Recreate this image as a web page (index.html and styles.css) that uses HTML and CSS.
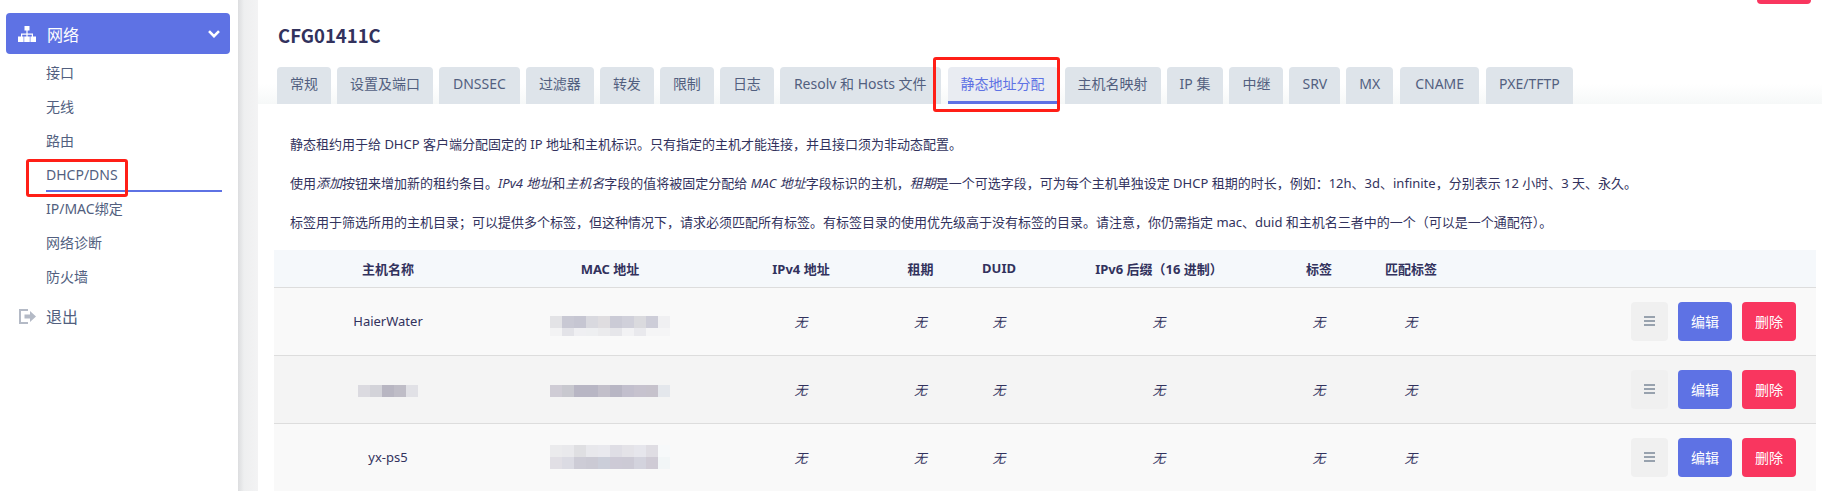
FILE: index.html
```html
<!DOCTYPE html>
<html lang="zh-CN">
<head>
  <meta charset="UTF-8">
  <title>CFG01411C - 静态地址分配</title>
  <link rel="stylesheet" href="styles.css">
</head>
<body>
  <aside class="sidebar">
    <a class="nav-head">
      <svg class="nav-icon" width="18" height="16" viewBox="0 0 18 16"><path fill="#fff" d="M6.500 0h5v4.600h-5zM8.400 4.600h1.200v3H15v2.800h-1.200V8.800H9.600v1.600H8.400V8.800H4.200v1.600H3V7.600h5.400zM0 10.600h5.600V16H0zM6.200 10.600h5.600V16H6.200zM12.400 10.600H18V16h-5.600z"/></svg>
      <span class="nav-head-text">网络</span>
      <svg class="nav-chevron" width="12" height="8" viewBox="0 0 12 8"><path fill="none" stroke="#fff" stroke-width="2.600" d="M1 1.200l5 5 5-5"/></svg>
    </a>
    <ul class="nav-list">
      <li class="nav-item">接口</li>
      <li class="nav-item">无线</li>
      <li class="nav-item">路由</li>
      <li class="nav-item nav-current">DHCP/DNS</li>
      <li class="nav-item">IP/MAC绑定</li>
      <li class="nav-item">网络诊断</li>
      <li class="nav-item">防火墙</li>
    </ul>
    <a class="nav-logout">
      <svg class="logout-icon" width="17" height="15" viewBox="0 0 17 15"><path fill="none" stroke="#b4bac6" stroke-width="2" d="M9 1H1v13h8"/><path fill="#b4bac6" d="M5.500 5.500H11V2l6 5.500-6 5.500V9.500H5.500z"/></svg>
      <span>退出</span>
    </a>
  </aside>

  <main class="main">
    <div class="page-head">
      <div class="top-bar"><button class="btn btn-danger top-btn"></button></div>
      <h2 class="page-title">CFG01411C</h2>
      <ul class="tabs">
        <li class="tab">常规</li>
        <li class="tab">设置及端口</li>
        <li class="tab tab-wide">DNSSEC</li>
        <li class="tab">过滤器</li>
        <li class="tab">转发</li>
        <li class="tab">限制</li>
        <li class="tab">日志</li>
        <li class="tab tab-wide">Resolv 和 Hosts 文件</li>
        <li class="tab tab-active">静态地址分配</li>
        <li class="tab">主机名映射</li>
        <li class="tab">IP 集</li>
        <li class="tab">中继</li>
        <li class="tab">SRV</li>
        <li class="tab">MX</li>
        <li class="tab tab-cname">CNAME</li>
        <li class="tab tab-pxe">PXE/TFTP</li>
      </ul>
    </div>

    <div class="notes">
      <p>静态租约用于给 DHCP 客户端分配固定的 IP 地址和主机标识。只有指定的主机才能连接&#xFF0C;并且接口须为非动态配置。</p>
      <p>使用<em>添加</em>按钮来增加新的租约条目。<em>IPv4 地址</em>和<em>主机名</em>字段的值将被固定分配给 <em>MAC 地址</em>字段标识的主机&#xFF0C;<em>租期</em>是一个可选字段&#xFF0C;可为每个主机单独设定 DHCP 租期的时长&#xFF0C;例如&#xFF1A;12h、3d、infinite&#xFF0C;分别表示 12 小时、3 天、永久。</p>
      <p>标签用于筛选所用的主机目录&#xFF1B;可以提供多个标签&#xFF0C;但这种情况下&#xFF0C;请求必须匹配所有标签。有标签目录的使用优先级高于没有标签的目录。请注意&#xFF0C;你仍需指定 mac、duid 和主机名三者中的一个&#xFF08;可以是一个通配符&#xFF09;。</p>
    </div>

    <table class="leases">
      <colgroup>
        <col class="col-name"><col class="col-mac"><col class="col-ip"><col class="col-time">
        <col class="col-duid"><col class="col-ip6"><col class="col-tag"><col class="col-match"><col>
      </colgroup>
      <thead>
        <tr>
          <th>主机名称</th><th>MAC 地址</th><th>IPv4 地址</th><th>租期</th>
          <th>DUID</th><th>IPv6 后缀&#xFF08;16 进制&#xFF09;</th><th>标签</th><th>匹配标签</th><th></th>
        </tr>
      </thead>
      <tbody>
        <tr>
          <td>HaierWater</td>
          <td><span class="mosaic mac-one"></span></td>
          <td><em>无</em></td><td><em>无</em></td><td><em>无</em></td><td><em>无</em></td><td><em>无</em></td><td><em>无</em></td>
          <td class="actions">
            <button class="btn btn-handle"><span class="handle-bars"></span></button>
            <button class="btn btn-primary">编辑</button>
            <button class="btn btn-danger">删除</button>
          </td>
        </tr>
        <tr>
          <td><span class="mosaic name-two"></span></td>
          <td><span class="mosaic mac-two"></span></td>
          <td><em>无</em></td><td><em>无</em></td><td><em>无</em></td><td><em>无</em></td><td><em>无</em></td><td><em>无</em></td>
          <td class="actions">
            <button class="btn btn-handle"><span class="handle-bars"></span></button>
            <button class="btn btn-primary">编辑</button>
            <button class="btn btn-danger">删除</button>
          </td>
        </tr>
        <tr>
          <td>yx-ps5</td>
          <td><span class="mosaic mac-three"></span></td>
          <td><em>无</em></td><td><em>无</em></td><td><em>无</em></td><td><em>无</em></td><td><em>无</em></td><td><em>无</em></td>
          <td class="actions">
            <button class="btn btn-handle"><span class="handle-bars"></span></button>
            <button class="btn btn-primary">编辑</button>
            <button class="btn btn-danger">删除</button>
          </td>
        </tr>
      </tbody>
    </table>
  </main>
</body>
</html>
```

FILE: styles.css
```css
*, *::after {
  box-sizing: border-box;
}
html, body {
  height: 100%;
}
body {
  margin: 0;
  display: flex;
  overflow: hidden;
  background: #fff;
  color: #32325d;
  font-family: "Noto Sans", "Noto Sans CJK SC", sans-serif;
  font-size: 13px;
}
ul {
  list-style: none;
  margin: 0;
  padding: 0;
}

/* sidebar */
.sidebar {
  width: 258px;
  flex: none;
  padding: 13px 28px 0 6px;
  background: linear-gradient(90deg, #fff 238px, #dcdddf 238px, #eeeff0 244px, #f3f3f4 258px);
}
.nav-head {
  display: flex;
  align-items: center;
  height: 41px;
  padding: 0 10px 0 12px;
  background: #5e72e4;
  border-radius: 4px;
  color: #fff;
  font-size: 16px;
}
.nav-icon {
  margin-right: 11px;
}
.nav-head-text {
  flex: 1;
}
.nav-list {
  padding: 2px 8px 0 40px;
}
.nav-item {
  position: relative;
  height: 34px;
  line-height: 34px;
  font-size: 14px;
  color: #525f7f;
}
.nav-current {
  border-bottom: 2px solid #5e72e4;
}
.nav-current::after {
  content: "";
  position: absolute;
  left: -20px;
  top: 1px;
  width: 102px;
  height: 38px;
  border: 3px solid #ff1f17;
  border-radius: 3px;
}
.nav-logout {
  display: flex;
  align-items: center;
  margin-top: 10px;
  padding-left: 13px;
  font-size: 16px;
  color: #525f7f;
}
.logout-icon {
  margin-right: 10px;
}

/* main */
.main {
  flex: 1;
  min-width: 0;
}
.page-head {
  height: 104px;
  padding-left: 19px;
  background: linear-gradient(180deg, #fff 84px, #f6f8f8 104px);
}
.top-bar {
  display: flex;
  justify-content: flex-end;
  align-items: flex-end;
  height: 4px;
  padding-right: 11px;
  overflow: hidden;
}
.top-btn {
  flex: none;
}
.page-title {
  margin: 19px 0 0 1px;
  height: 44px;
  font-family: "Noto Sans CJK SC", sans-serif;
  font-size: 18.5px;
  line-height: 24px;
  font-weight: 700;
  color: #32325d;
}
.tabs {
  display: flex;
  gap: 6px;
  height: 37px;
}
.tab {
  position: relative;
  padding: 0 13px;
  background: #dee4ea;
  border-radius: 4px 4px 0 0;
  font-size: 14px;
  line-height: 33px;
  white-space: nowrap;
  color: #525f7f;
}
.tab-wide {
  padding: 0 14px;
}
.tab-cname {
  margin-left: 1px;
  padding: 0 15px;
}
.tab-pxe {
  margin-left: 1px;
}
.tab-active {
  margin: 0 1px;
  background: #e9ecf2;
  border-bottom: 3px solid #5e72e4;
  color: #5e72e4;
}
.tab-active::after {
  content: "";
  position: absolute;
  left: -15px;
  right: -2px;
  top: -10px;
  height: 55px;
  border: 3px solid #ff1f17;
  border-radius: 3px;
}

.notes {
  padding: 30px 0 0 32px;
  height: 146px;
  color: #32325d;
}
.notes p {
  margin: 0 0 19px;
  line-height: 20px;
}

/* table */
.leases {
  width: 1542px;
  margin-left: 16px;
  border-collapse: collapse;
  table-layout: fixed;
}
.col-name { width: 228px; }
.col-mac { width: 216px; }
.col-ip { width: 166px; }
.col-time { width: 73px; }
.col-duid { width: 84px; }
.col-ip6 { width: 236px; }
.col-tag { width: 84px; }
.col-match { width: 100px; }
.leases th {
  height: 37px;
  padding: 0;
  background: #f5f8fb;
  border-bottom: 1px solid #ddd;
  font-weight: 700;
}
.leases td {
  height: 68px;
  padding: 0;
  text-align: center;
  border-bottom: 1px solid #ddd;
  background: #f9f9f9;
}
.leases tbody tr:nth-child(even) td {
  background: #f4f4f4;
}
.leases td.actions {
  padding-right: 20px;
  text-align: right;
  font-size: 0;
}

/* buttons */
.btn {
  width: 54px;
  height: 39px;
  margin-left: 10px;
  padding: 0;
  border: none;
  border-radius: 4px;
  color: #fff;
  font: 14px "Noto Sans CJK SC", sans-serif;
  vertical-align: middle;
}
.btn-primary {
  background: #5e72e4;
}
.btn-danger {
  background: #f9365f;
}
.btn-handle {
  width: 37px;
  background: #f0f0f0;
}
.handle-bars {
  display: block;
  width: 11px;
  height: 10px;
  margin: 0 auto;
  background: repeating-linear-gradient(180deg, #98a2ae 0, #98a2ae 2px, transparent 2px, transparent 4px);
}

/* pixelated parts of the screenshot */
.mosaic {
  display: block;
  margin: 0 auto;
  background-repeat: no-repeat;
}
.mac-one {
  width: 120px;
  height: 20px;
  margin-top: 9px;
  background-image:
    linear-gradient(90deg, #e3e3e6 12px, #c9c9d4 12px 24px, #c6c6d2 24px 36px, #d9d9df 36px 48px, #dfdde0 48px 60px, #cbcbd6 60px 72px, #d0d0da 72px 84px, #dadade 84px 96px, #cdcdd8 96px 108px, #f0f0f2 108px),
    linear-gradient(90deg, #f3f3f4 12px, #e3e3e8 12px 24px, #efeff2 24px 36px, #eeeff1 36px 48px, #ebebed 48px 60px, #e6e6ea 60px 72px, #f2f2f4 72px 84px, #e9e9ed 84px 96px, #f5f5f6 96px);
  background-size: 100% 12px, 100% 8px;
  background-position: 0 0, 0 12px;
}
.mac-two {
  width: 120px;
  height: 12px;
  margin-top: 3px;
  background-image: linear-gradient(90deg, #cfccd5 12px, #c8c8cf 12px 24px, #b8b6c4 24px 48px, #c2bfca 48px 60px, #b8b6c4 60px 72px, #c2bfcd 72px 84px, #c6c2ce 84px 96px, #c6c2cc 96px 108px, #e4e7ec 108px);
}
.name-two {
  width: 60px;
  height: 12px;
  margin-top: 3px;
  background-image: linear-gradient(90deg, #dbdae0 12px, #d3d3d9 12px 24px, #b8b6c2 24px 36px, #bfbdc7 36px 48px, #e1e1e6 48px);
}
.mac-three {
  width: 120px;
  height: 24px;
  background-image:
    linear-gradient(90deg, #ebebed 12px, #e9e9ec 12px 24px, #dfdfe2 24px 36px, #e8e8ec 36px 48px, #e9e9ee 48px 60px, #dfdee5 60px 72px, #e4e3e8 72px 84px, #e6e6ec 84px 96px, #dfdde3 96px 108px, #f7f9fa 108px),
    linear-gradient(90deg, #e1dfe5 12px, #dbdbe3 12px 24px, #cdccd6 24px 36px, #cbcad4 36px 48px, #cbced9 48px 60px, #cdcad6 60px 72px, #cccad5 72px 84px, #d3d3dd 84px 96px, #cfcbd5 96px 108px, #f2f6f7 108px);
  background-size: 100% 12px, 100% 12px;
  background-position: 0 0, 0 12px;
}
```
